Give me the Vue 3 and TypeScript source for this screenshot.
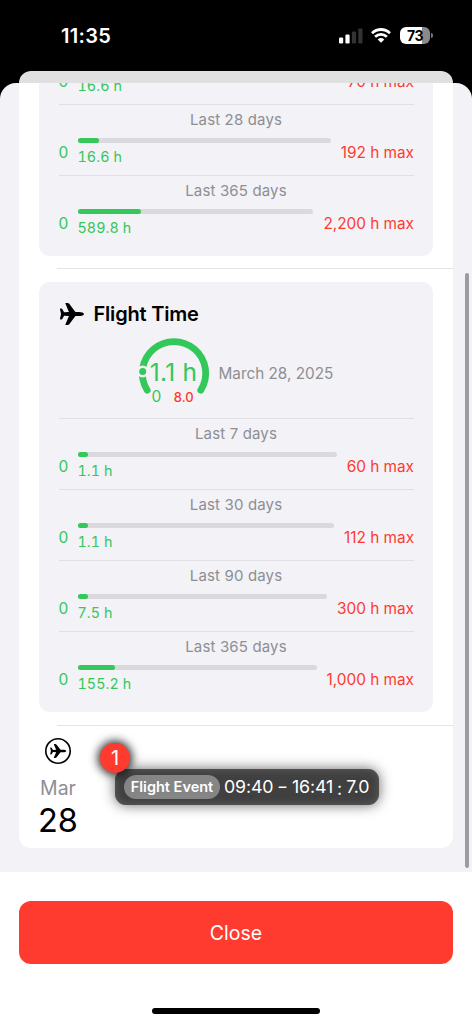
<script setup lang="ts">
interface Limit {
  title: string
  value: string
  max: string
  used: number
}

const dutyLimits: Limit[] = [
  { title: '', value: '16.6 h', max: '70 h max', used: 23.7 },
  { title: 'Last 28 days', value: '16.6 h', max: '192 h max', used: 8.65 },
  { title: 'Last 365 days', value: '589.8 h', max: '2,200 h max', used: 26.8 },
]

const flightLimits: Limit[] = [
  { title: 'Last 7 days', value: '1.1 h', max: '60 h max', used: 1.8 },
  { title: 'Last 30 days', value: '1.1 h', max: '112 h max', used: 1 },
  { title: 'Last 90 days', value: '7.5 h', max: '300 h max', used: 2.5 },
  { title: 'Last 365 days', value: '155.2 h', max: '1,000 h max', used: 15.5 },
]

const planePath =
  'M70 32C70 28 62 26 56 26H45L27 2Q25 0 22 0H17Q15 0 16 2L26 26L12 27L7 18Q6 16 4 16H1Q0 16 0 18L3 32L0 46Q0 48 1 48H4Q6 48 7 46L12 37L26 38L16 62Q15 64 17 64H22Q25 64 27 62L45 38H56C62 38 70 36 70 32Z'
</script>

<template>
  <div class="screen">
    <header class="status">
      <span class="clock">11:35</span>
      <div class="indicators">
        <svg class="signal" width="24" height="16" viewBox="0 0 24 16">
          <rect x="0" y="9.6" width="4.2" height="5.8" rx="1.2" fill="#fff" />
          <rect x="6.4" y="6.6" width="4.2" height="8.8" rx="1.2" fill="#fff" />
          <rect x="12.9" y="3.6" width="4.2" height="11.8" rx="1.2" fill="#333" />
          <rect x="19.3" y="0.4" width="4.2" height="15" rx="1.2" fill="#333" />
        </svg>
        <svg class="wifi" width="20" height="15" viewBox="0 0 20 15">
          <g fill="none" stroke="#fff" stroke-width="2.8">
            <path d="M1 5.2Q5 1.5 10 1.5T19 5.2" />
            <path d="M4.1 8.8Q6.8 6.300 10 6.300T15.900 8.800" />
          </g>
          <path d="M6.700 11.500Q10 8.700 13.300 11.500L10 14.800Z" fill="#fff" />
        </svg>
        <div class="battery"><span>73</span></div>
      </div>
    </header>

    <div class="back-sheet"></div>

    <main class="sheet">
      <div class="list">
        <section class="card duty">
          <div v-for="limit in dutyLimits" :key="limit.max" class="limit">
            <div class="title">{{ limit.title }}</div>
            <div class="meter">
              <span class="zero">0</span>
              <div class="gauge-column">
                <div class="track"><div class="fill" :style="{ width: limit.used + '%' }"></div></div>
                <div class="value">{{ limit.value }}</div>
              </div>
              <span class="max">{{ limit.max }}</span>
            </div>
          </div>
        </section>

        <div class="separator"></div>

        <section class="card">
          <h2>
            <svg width="24" height="22" viewBox="0 0 70 64"><path :d="planePath" /></svg>
            <span>Flight Time</span>
          </h2>
          <div class="today">
            <div class="dial">
              <svg width="72" height="72" viewBox="0 0 72 72">
                <path d="M9.200 53.200A31.700 31.700 0 1 1 62.800 53.200" fill="none" stroke="#34c759" stroke-width="6.800" stroke-linecap="round" />
                <circle cx="4.700" cy="34.500" r="6" fill="#f2f2f7" />
                <circle cx="4.700" cy="34.500" r="3.500" fill="#34c759" />
              </svg>
              <span class="reading">1.1 h</span>
              <div class="range"><span class="low">0</span><span class="high">8.0</span></div>
            </div>
            <span class="date">March 28, 2025</span>
          </div>
          <div v-for="limit in flightLimits" :key="limit.max" class="limit">
            <div class="title">{{ limit.title }}</div>
            <div class="meter">
              <span class="zero">0</span>
              <div class="gauge-column">
                <div class="track"><div class="fill" :style="{ width: limit.used + '%' }"></div></div>
                <div class="value">{{ limit.value }}</div>
              </div>
              <span class="max">{{ limit.max }}</span>
            </div>
          </div>
        </section>

        <div class="separator"></div>

        <section class="day">
          <div class="day-label">
            <svg width="28" height="28" viewBox="0 0 28 28">
              <circle cx="14" cy="14" r="12.200" fill="none" stroke="#000" stroke-width="1.600" />
              <path :d="planePath" transform="translate(6.200 7.100) scale(.230 .216)" />
            </svg>
            <span class="month">Mar</span>
            <span class="number">28</span>
          </div>
          <div class="event">
            <span class="pill">Flight Event</span>
            <span class="times">09:40 <span class="dash">–</span> 16:41</span>
            <span class="colon">:</span>
            <span class="hours">7.0</span>
            <span class="count">1</span>
          </div>
        </section>
      </div>
      <div class="scrollbar"></div>
    </main>

    <footer>
      <button>Close</button>
      <div class="home"></div>
    </footer>
  </div>
</template>

<style>
body {
  background: #000;
}
</style>

<style scoped>
.screen {
  width: 472px;
  height: 1024px;
  display: flex;
  flex-direction: column;
  overflow: hidden;
  background: #000;
  font-family: Inter, "Liberation Sans", sans-serif;
}
.status {
  height: 71px;
  flex: none;
  display: flex;
  justify-content: space-between;
  align-items: center;
  box-sizing: border-box;
  padding: 0 42px 0 61px;
  color: #fff;
}
.clock {
  font-size: 20px;
  font-weight: 600;
  letter-spacing: 0.3px;
}
.indicators {
  display: flex;
  align-items: center;
}
.wifi {
  margin-left: 8px;
}
.battery {
  position: relative;
  width: 30px;
  height: 17px;
  margin-left: 9px;
  border-radius: 6px;
  background: linear-gradient(90deg, #fff 22px, #8a8a8a 22px);
  color: #000;
  font-size: 14px;
  line-height: 17px;
  font-weight: 700;
  text-align: center;
  letter-spacing: -0.4px;
}
.battery::after {
  content: "";
  position: absolute;
  left: 31px;
  top: 6px;
  width: 1.5px;
  height: 5px;
  border-radius: 0 2px 2px 0;
  background: #777;
}
.back-sheet {
  flex: none;
  height: 32px;
  margin: 0 19px -20px;
  border-radius: 12px 12px 0 0;
  background: #e0e0e0;
}
.sheet {
  position: relative;
  flex: none;
  height: 789px;
  overflow: hidden;
  border-radius: 16px 16px 0 0;
  background: #f2f2f7;
}
.list {
  width: 434px;
  height: 840px;
  margin: -75px 0 0 19px;
  border-radius: 12px;
  background: #fff;
  overflow: hidden;
}
.card {
  box-sizing: border-box;
  width: 394px;
  height: 430px;
  margin: 0 20px;
  padding: 0 19.500px;
  border-radius: 11px;
  background: #f2f2f7;
  overflow: hidden;
}
.card.duty {
  height: 222.500px;
  margin-top: 25px;
}
.limit {
  box-sizing: border-box;
  height: 71.100px;
  border-top: 1px solid #e0e0e4;
  padding-top: 5px;
}
.title {
  height: 20px;
  line-height: 20px;
  text-align: center;
  color: #8e8e93;
  font-size: 15px;
  letter-spacing: 0.15px;
}
.meter {
  display: flex;
  align-items: flex-start;
  padding-top: 7.500px;
}
.zero,
.max {
  margin-top: 5px;
  font-size: 15.500px;
  line-height: 20px;
}
.zero {
  width: 19px;
  color: #34c759;
}
.max {
  margin-right: -0.5px;
  color: #ff3b30;
  font-size: 15.400px;
  letter-spacing: -0.03px;
  white-space: nowrap;
}
.gauge-column {
  flex: 1;
  margin-right: 10px;
}
.track {
  height: 5px;
  border-radius: 3px;
  background: #d9d9de;
}
.fill {
  min-width: 10px;
  height: 5px;
  border-radius: 3px;
  background: #34c759;
}
.value {
  margin-top: 4px;
  color: #34c759;
  font-size: 14.300px;
  line-height: 20px;
  font-variant-numeric: tabular-nums;
  letter-spacing: 0.1px;
}
.separator {
  height: 1px;
  margin: 12.500px 0 13px 38px;
  background: #e4e4e6;
}
h2 {
  display: flex;
  align-items: center;
  gap: 10px;
  height: 24px;
  margin: 20px 0 0 1px;
  font-size: 20px;
  font-weight: 600;
  letter-spacing: -0.2px;
}
.today {
  display: flex;
  height: 92px;
}
.dial {
  position: relative;
  width: 72px;
  height: 72px;
  margin: 11px 0 0 79px;
}
.dial svg {
  display: block;
  overflow: visible;
}
.reading {
  position: absolute;
  left: 0;
  right: 0;
  top: 20px;
  text-align: center;
  color: #34c759;
  font-size: 24.500px;
  line-height: 30px;
  letter-spacing: 0.3px;
  white-space: nowrap;
}
.range {
  position: absolute;
  left: 14px;
  top: 50px;
  display: flex;
  gap: 12.500px;
  font-size: 15.500px;
  line-height: 20px;
}
.low {
  color: #34c759;
}
.high {
  color: #ff3b30;
  font-size: 13px;
  font-weight: 500;
}
.date {
  margin: 38px 0 0 9px;
  color: #8e8e93;
  font-size: 15.300px;
  line-height: 20px;
}
.day {
  display: flex;
}
.day-label {
  display: flex;
  flex-direction: column;
  align-items: center;
  width: 78px;
  margin-top: -2px;
}
.month {
  margin-top: 11px;
  color: #8e8e93;
  font-size: 19.500px;
  line-height: 24px;
}
.number {
  margin-top: 1px;
  font-size: 32.500px;
  line-height: 40px;
}
.event {
  position: relative;
  display: flex;
  align-items: center;
  box-sizing: border-box;
  width: 264px;
  height: 36px;
  margin: 30px 0 0 18px;
  padding-left: 9px;
  border-radius: 11px;
  background: #404040;
  box-shadow: 0 0 13px rgba(0, 0, 0, 0.6), inset 0 0 9px rgba(110, 110, 110, 0.7);
  color: #fff;
  font-size: 17.800px;
  white-space: nowrap;
}
.pill {
  width: 96px;
  height: 24px;
  border-radius: 12px;
  background: #858585;
  font-size: 14.500px;
  line-height: 24px;
  font-weight: 600;
  text-align: center;
}
.times {
  margin-left: 4px;
  letter-spacing: -0.13px;
}
.dash {
  display: inline-block;
  transform: scaleX(0.85);
}
.colon {
  margin: 3px 4px 0;
}
.hours {
  letter-spacing: -0.2px;
}
.count {
  position: absolute;
  left: -15px;
  top: -26px;
  width: 30px;
  height: 30px;
  border-radius: 50%;
  background: #ff3b30;
  box-shadow: 0 0 10px 2px rgba(0, 0, 0, 0.85);
  font-size: 20px;
  line-height: 30px;
  text-align: center;
}
.scrollbar {
  position: absolute;
  right: 3.500px;
  top: 190px;
  width: 4px;
  height: 595px;
  border-radius: 2px;
  background: #9c9ca0;
}
footer {
  flex: 1;
  display: flex;
  flex-direction: column;
  align-items: center;
  background: #fff;
}
button {
  flex: none;
  width: 434px;
  height: 63px;
  margin-top: 29px;
  padding: 0;
  border: 0;
  border-radius: 12px;
  background: #ff3b30;
  color: #fff;
  font: 19.500px Inter, "Liberation Sans", sans-serif;
}
.home {
  width: 168px;
  height: 6px;
  margin-top: 44px;
  border-radius: 3px;
  background: #000;
}
</style>
